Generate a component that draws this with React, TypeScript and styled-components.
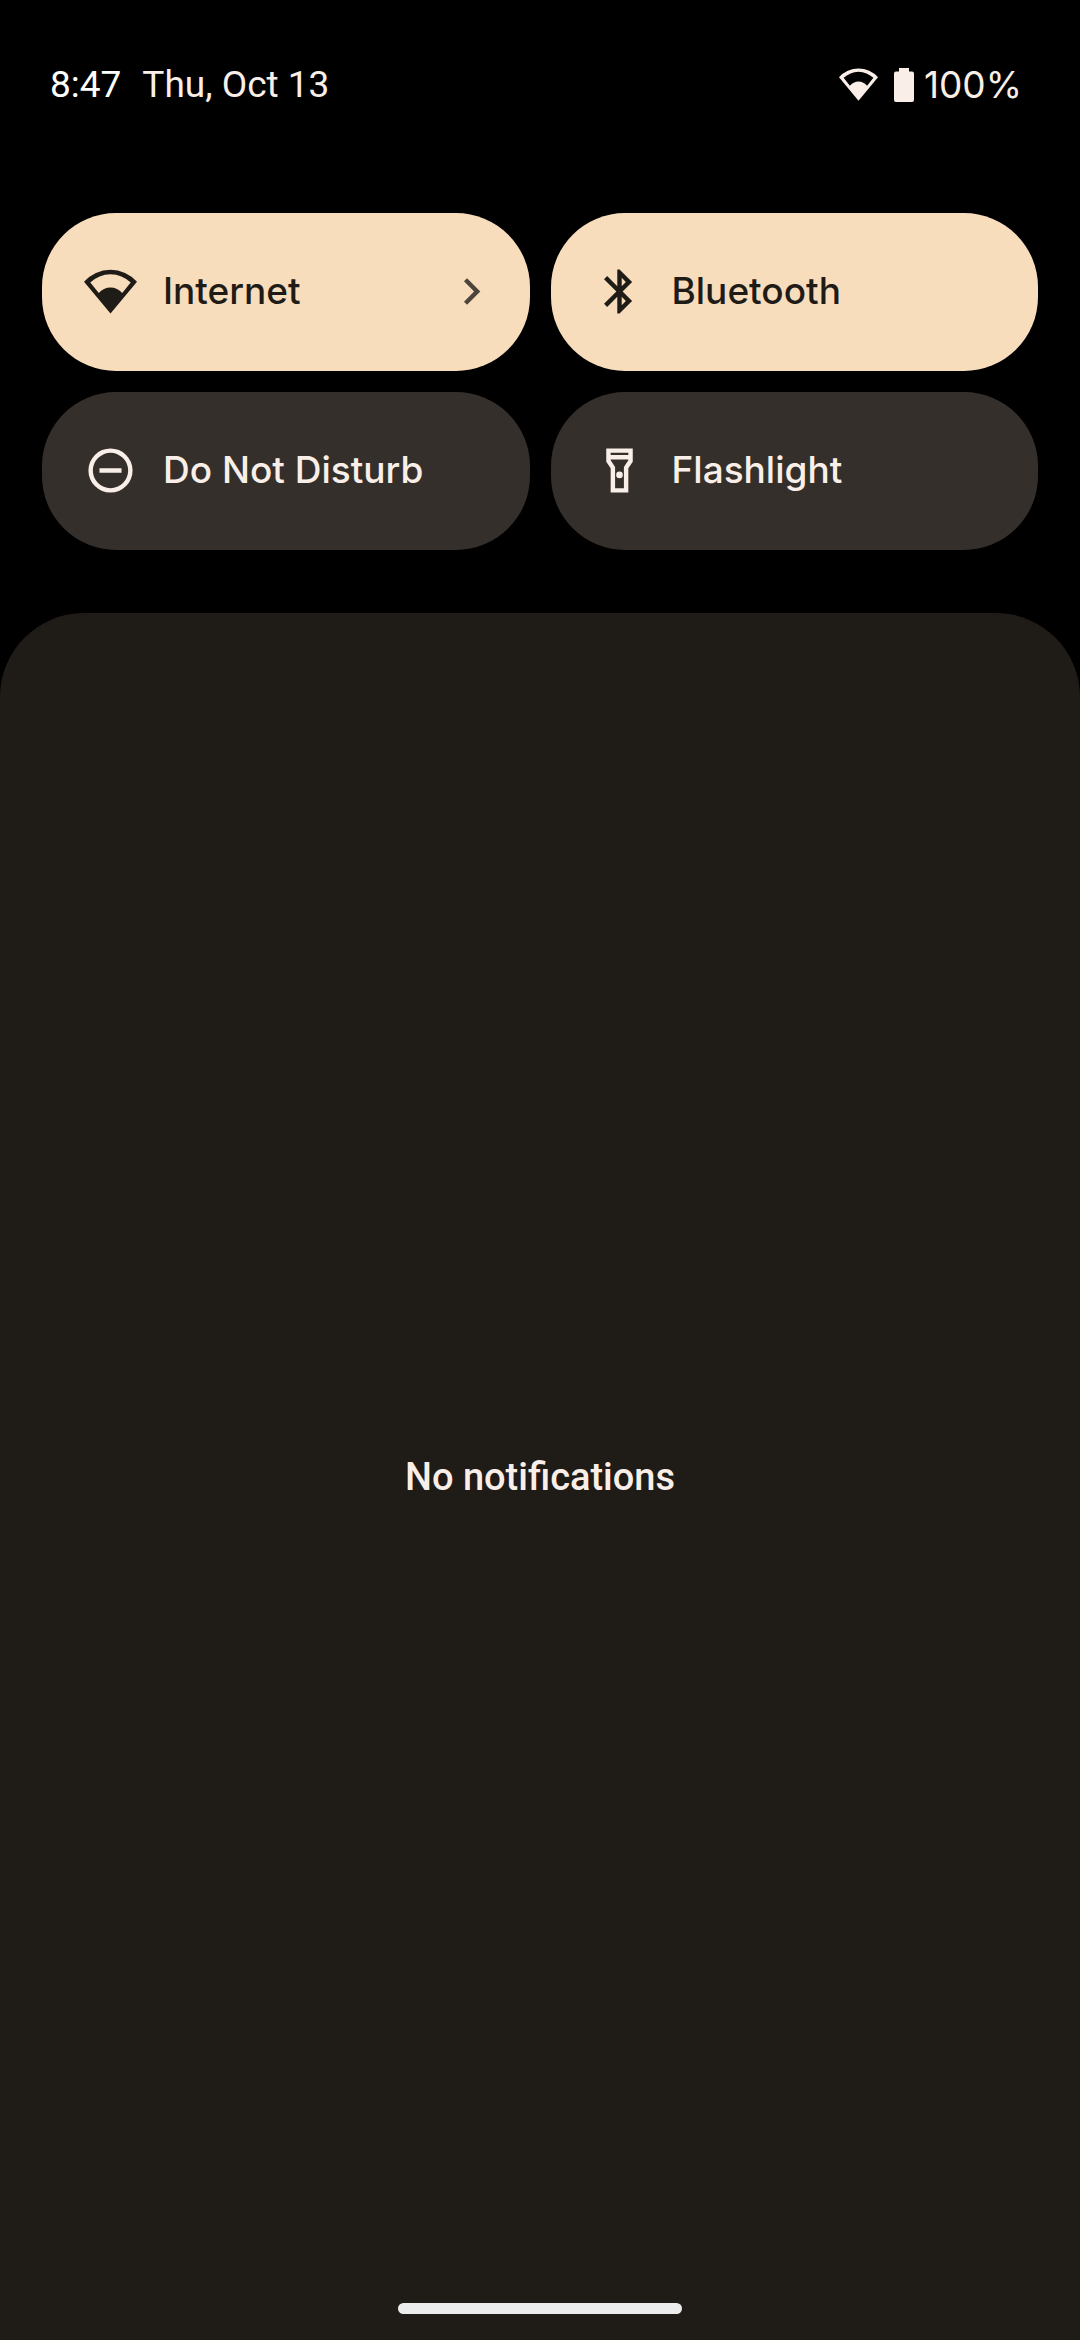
import React, { useState } from "react";
import styled, { createGlobalStyle } from "styled-components";

const colors = {
  scrim: "#000000",
  panel: "#1f1b16",
  tileOn: "#f8ddbd",
  tileOff: "#352f2b",
  ink: "#1f1b16",
  inkMuted: "#4d453c",
  light: "#f9efe8",
  clock: "#ffffff",
  handle: "#ececec",
};

const GlobalStyle = createGlobalStyle`
  *, *::before, *::after { box-sizing: border-box; }
  body {
    margin: 0;
    background: ${colors.scrim};
    font-family: Roboto, "Open Sans", sans-serif;
  }
`;

const Shade = styled.div`
  position: relative;
  display: flex;
  flex-direction: column;
  min-height: 100vh;
  background: ${colors.scrim};
`;

const StatusBar = styled.header`
  display: flex;
  align-items: center;
  justify-content: space-between;
  height: 85px;
  margin-top: 42px;
  padding: 0 58px 0 50px;
  font-size: 37px;
  line-height: 44px;
  color: ${colors.light};
`;

const DateTime = styled.div`
  display: flex;
  gap: 21px;
`;

const Clock = styled.time`
  color: ${colors.clock};
`;

const StatusIcons = styled.div`
  display: flex;
  align-items: center;
`;

const BatteryGroup = styled.div`
  display: flex;
  align-items: center;
  gap: 10px;
  margin-left: 16px;
`;

const BatteryLevel = styled.span`
  font-family: Inter, Roboto, sans-serif;
`;

const Icon = styled.svg<{ $size: number }>`
  display: block;
  flex: none;
  width: ${(p) => p.$size}px;
  height: ${(p) => p.$size}px;
  fill: currentColor;
`;

const BatteryIcon = styled.svg`
  display: block;
  width: 20px;
  height: 34px;
  fill: currentColor;
`;

const Tiles = styled.main`
  display: grid;
  grid-template-columns: 1fr 1fr;
  gap: 21px;
  padding: 86px 42px 63px;
`;

const Tile = styled.button<{ $on: boolean }>`
  display: flex;
  align-items: center;
  gap: 26px;
  height: 158px;
  padding: 0 32px 2px 42px;
  border: 0;
  border-radius: 74px;
  background: ${(p) => (p.$on ? colors.tileOn : colors.tileOff)};
  color: ${(p) => (p.$on ? colors.ink : colors.light)};
  font-family: Inter, Roboto, sans-serif;
  font-size: 37px;
  font-weight: 500;
  line-height: 44px;
  text-align: left;
  cursor: pointer;
`;

const TileLabel = styled.span`
  flex: 1;
`;

const Chevron = styled(Icon)`
  color: ${colors.inkMuted};
`;

const Notifications = styled.section`
  display: flex;
  flex: 1;
  align-items: center;
  justify-content: center;
  border-radius: 84px 84px 0 0;
  background: ${colors.panel};
`;

const EmptyText = styled.p`
  margin: 0;
  color: ${colors.light};
  font-size: 38px;
  font-weight: 500;
  line-height: 44px;
`;

const HomeHandle = styled.button`
  position: absolute;
  bottom: 26px;
  left: 50%;
  width: 284px;
  height: 11px;
  padding: 0;
  border: 0;
  border-radius: 6px;
  background: ${colors.handle};
  transform: translateX(-50%);
`;

const paths = {
  wifi: "M12 22 0 7.6A16 16 0 0 1 24 7.6ZM2.85 7.9 6.7 12.7A6.9 6.9 0 0 1 17.3 12.7L21.15 7.9A13.2 13.2 0 0 0 2.85 7.9Z",
  bluetooth:
    "M17.71 7.71 12 2h-1v7.59L6.41 5 5 6.41 10.59 12 5 17.59 6.41 19 11 14.41V22h1l5.71-5.71-4.3-4.29 4.3-4.29ZM13 5.83l1.88 1.88L13 9.59V5.83Zm1.88 10.46L13 18.17v-3.76l1.88 1.88Z",
  dnd: "M12 2a10 10 0 1 0 0 20 10 10 0 0 0 0-20Zm0 18a8 8 0 1 1 0-16 8 8 0 0 1 0 16ZM7 11h10v2H7Z",
  flashlight:
    "M6 2v6l2 3v11h8V11l2-3V2H6Zm10 2v1H8V4h8Zm-2 6.4V20h-4v-9.6L8 7.39V7h8v.39L14 10.4ZM12 12.5a1.5 1.5 0 1 0 0 3 1.5 1.5 0 0 0 0-3Z",
  chevron: "M10 6 8.59 7.41 13.17 12l-4.58 4.59L10 18l6-6Z",
};

type TileSpec = { icon: keyof typeof paths; label: string; on: boolean; more?: boolean };

const initialTiles: TileSpec[] = [
  { icon: "wifi", label: "Internet", on: true, more: true },
  { icon: "bluetooth", label: "Bluetooth", on: true },
  { icon: "dnd", label: "Do Not Disturb", on: false },
  { icon: "flashlight", label: "Flashlight", on: false },
];

function Glyph({ name, size }: { name: keyof typeof paths; size: number }) {
  return (
    <Icon $size={size} viewBox="0 0 24 24" aria-hidden="true">
      <path fillRule="evenodd" d={paths[name]} />
    </Icon>
  );
}

export default function App() {
  const [tiles, setTiles] = useState(initialTiles);
  const toggle = (label: string) =>
    setTiles((list) => list.map((t) => (t.label === label ? { ...t, on: !t.on } : t)));

  return (
    <Shade>
      <GlobalStyle />
      <StatusBar>
        <DateTime>
          <Clock>8:47</Clock>
          <time>Thu, Oct 13</time>
        </DateTime>
        <StatusIcons>
          <Glyph name="wifi" size={39} />
          <BatteryGroup>
            <BatteryIcon viewBox="0 0 20 34" aria-hidden="true">
              <path d="M5 0h10v3.5h3a2 2 0 0 1 2 2V32a2 2 0 0 1-2 2H2a2 2 0 0 1-2-2V5.500a2 2 0 0 1 2-2h3Z" />
            </BatteryIcon>
            <BatteryLevel>100%</BatteryLevel>
          </BatteryGroup>
        </StatusIcons>
      </StatusBar>
      <Tiles>
        {tiles.map((tile) => (
          <Tile
            key={tile.label}
            type="button"
            $on={tile.on}
            aria-pressed={tile.on}
            onClick={() => toggle(tile.label)}
          >
            <Glyph name={tile.icon} size={53} />
            <TileLabel>{tile.label}</TileLabel>
            {tile.more && (
              <Chevron $size={53} viewBox="0 0 24 24" aria-hidden="true">
                <path d={paths.chevron} />
              </Chevron>
            )}
          </Tile>
        ))}
      </Tiles>
      <Notifications>
        <EmptyText>No notifications</EmptyText>
      </Notifications>
      <HomeHandle type="button" aria-label="Home" />
    </Shade>
  );
}
